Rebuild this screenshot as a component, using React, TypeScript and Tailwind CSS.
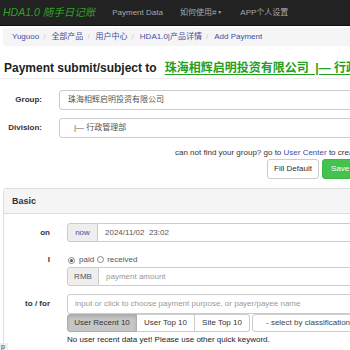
import React from "react";

const font = { fontFamily: '"Liberation Sans", Arial, "Noto Sans CJK SC", sans-serif' };

function Radio({ checked }: { checked?: boolean }) {
  return (
    <span className="inline-flex w-[7px] h-[7px] rounded-full border border-[#8a8a8a] bg-white items-center justify-center">
      {checked ? <span className="w-[3px] h-[3px] rounded-full bg-[#555]" /> : null}
    </span>
  );
}

export default function App() {
  return (
    <div
      className="relative w-[350px] h-[350px] overflow-hidden bg-white text-[#333] text-[8px] leading-none"
      style={font}
    >
      <div className="w-[520px]">
        {/* navbar */}
        <div className="h-[26px] bg-[#222] border-b border-[#101010] flex items-center whitespace-nowrap">
          <span className="ml-[3px] italic text-[10.5px] text-[#2fa326]">HDA1.0 随手日记账</span>
          <span className="ml-[17px] text-[#a8a8a8]">Payment Data</span>
          <span className="ml-[17px] text-[#a8a8a8] flex items-center">
            如何使用#<span className="ml-[1px] text-[5px]">▼</span>
          </span>
          <span className="ml-[18px] text-[#a8a8a8]">APP个人设置</span>
        </div>

        {/* breadcrumb */}
        <div className="mt-[2px] ml-[3px] h-[18px] bg-[#f5f5f5] rounded-[3px] flex items-center pl-[9px] whitespace-nowrap text-[#3d4fa3]">
          <span>Yuguoo</span>
          <span className="ml-[4px] mr-[6px] text-[#ccc]">/</span>
          <span>全部产品</span>
          <span className="ml-[4px] mr-[6px] text-[#ccc]">/</span>
          <span>用户中心</span>
          <span className="ml-[4px] mr-[6px] text-[#ccc]">/</span>
          <span>HDA1.0|产品详情</span>
          <span className="ml-[4px] mr-[6px] text-[#ccc]">/</span>
          <span>Add Payment</span>
        </div>

        {/* title */}
        <div className="mt-[14px] pb-[2px] border-b border-[#eee]">
          <div className="h-[16px] flex items-center whitespace-nowrap text-[12px] font-bold text-[#222] pl-[4px]">
            <span>Payment submit/subject to</span>
            <span className="ml-[8px] text-[#22a022] underline decoration-[1px] underline-offset-[2px]">
              珠海相辉启明投资有限公司&nbsp;&nbsp;|— 行政管理部
            </span>
          </div>
        </div>

        {/* group */}
        <div className="mt-[11px] flex items-center">
          <div className="w-[42px] text-right font-bold">Group:</div>
          <div className="ml-[17px] w-[440px] h-[20px] border border-[#ccc] rounded-[3px] flex items-center pl-[8px] text-[#555]">
            珠海相辉启明投资有限公司
          </div>
        </div>
        <div className="mt-[8px] flex items-center">
          <div className="w-[42px] text-right font-bold">Division:</div>
          <div className="ml-[17px] w-[440px] h-[20px] border border-[#ccc] rounded-[3px] flex items-center pl-[14px] text-[#555]">
            |— 行政管理部
          </div>
        </div>

        <div className="mt-[10px] h-[10px] flex items-center pl-[175px] whitespace-nowrap">
          can not find your group? go to&nbsp;<span className="text-[#3d4fa3]">User Center</span>&nbsp;to create one.
        </div>
        <div className="mt-[1px] pl-[267px] flex gap-[3px]">
          <div className="w-[52px] h-[20px] border border-[#ccc] rounded-[3px] bg-white flex items-center justify-center">
            Fill Default
          </div>
          <div className="w-[50px] h-[20px] pl-[8px] border border-[#3cb84a] rounded-[3px] bg-[#43c24f] text-white flex items-center">
            Save
          </div>
        </div>

        {/* panel */}
        <div className="mt-[9px] ml-[3px] w-[480px] border border-[#ddd] rounded-[3px]">
          <div className="h-[25px] bg-[#f5f5f5] border-b border-[#ddd] flex items-center pl-[8px] font-bold text-[9px] text-[#333]">
            Basic
          </div>
          <div className="pt-[9px] pb-[20px]">
            {/* on */}
            <div className="flex items-center">
              <div className="w-[46px] text-right font-bold">on</div>
              <div className="ml-[17px] flex h-[19px]">
                <div className="w-[31px] bg-[#eee] border border-[#ccc] rounded-l-[3px] flex items-center justify-center text-[#3d4fa3]">
                  now
                </div>
                <div className="w-[380px] border border-l-0 border-[#ccc] rounded-r-[3px] flex items-center pl-[7px] text-[#555] whitespace-pre">
                  2024/11/02  23:02
                </div>
              </div>
            </div>

            {/* I */}
            <div className="mt-[12px] flex">
              <div className="w-[46px] h-[12px] flex items-center justify-end font-bold">I</div>
              <div className="ml-[17px] flex flex-col">
                <div className="h-[12px] flex items-center pl-[1px] text-[#555]">
                  <Radio checked />
                  <span className="ml-[4px]">paid</span>
                  <span className="ml-[3px]"><Radio /></span>
                  <span className="ml-[3px]">received</span>
                </div>
                <div className="mt-[1px] flex h-[19px]">
                  <div className="w-[32px] bg-[#eee] border border-[#ccc] rounded-l-[3px] flex items-center justify-center text-[#555]">
                    RMB
                  </div>
                  <div className="w-[380px] border border-l-0 border-[#ccc] rounded-r-[3px] flex items-center pl-[7px] text-[#999]">
                    payment amount
                  </div>
                </div>
              </div>
            </div>

            {/* to / for */}
            <div className="mt-[8px] flex">
              <div className="w-[46px] h-[20px] flex items-center justify-end font-bold whitespace-nowrap">to / for</div>
              <div className="ml-[17px] flex flex-col">
                <div className="w-[412px] h-[20px] border border-[#ccc] rounded-[3px] flex items-center pl-[7px] text-[#999]">
                  input or click to choose payment purpose, or payer/payee name
                </div>
                <div className="flex h-[18px] whitespace-nowrap">
                  <div className="w-[70px] bg-[#c6c6c6] border border-[#adadad] rounded-l-[3px] flex items-center justify-center shadow-[inset_0_2px_3px_rgba(0,0,0,0.12)]">
                    User Recent 10
                  </div>
                  <div className="w-[58px] border border-l-0 border-[#ccc] flex items-center justify-center">
                    User Top 10
                  </div>
                  <div className="w-[55px] border border-l-0 border-[#ccc] rounded-r-[3px] flex items-center justify-center">
                    Site Top 10
                  </div>
                  <div className="ml-[2px] w-[130px] border border-[#ccc] rounded-[3px] flex items-center pl-[13px] text-[#444]">
                    - select by classification -
                  </div>
                </div>
                <div className="mt-[3px] h-[10px] flex items-center whitespace-nowrap text-[#222]">
                  No user recent data yet! Please use other quick keyword.
                </div>
              </div>
            </div>
          </div>
        </div>
      </div>

      <div className="absolute left-0 bottom-0 w-[8px] h-[7px] bg-[#eee] overflow-hidden text-[7px] leading-[7px] text-[#333] pl-[1px]">
        p
      </div>
    </div>
  );
}
